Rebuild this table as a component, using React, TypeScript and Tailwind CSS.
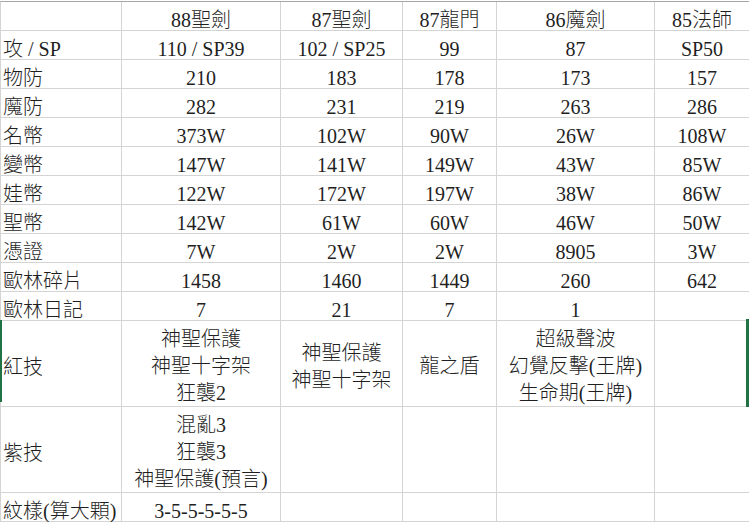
import React from 'react'

type Row = {
  label: string
  cells: (string | string[])[]
  tall?: boolean
}

const rows: Row[] = [
  { label: '', cells: ['88聖劍', '87聖劍', '87龍門', '86魔劍', '85法師'] },
  { label: '攻 / SP', cells: ['110 / SP39', '102 / SP25', '99', '87', 'SP50'] },
  { label: '物防', cells: ['210', '183', '178', '173', '157'] },
  { label: '魔防', cells: ['282', '231', '219', '263', '286'] },
  { label: '名幣', cells: ['373W', '102W', '90W', '26W', '108W'] },
  { label: '變幣', cells: ['147W', '141W', '149W', '43W', '85W'] },
  { label: '娃幣', cells: ['122W', '172W', '197W', '38W', '86W'] },
  { label: '聖幣', cells: ['142W', '61W', '60W', '46W', '50W'] },
  { label: '憑證', cells: ['7W', '2W', '2W', '8905', '3W'] },
  { label: '歐林碎片', cells: ['1458', '1460', '1449', '260', '642'] },
  { label: '歐林日記', cells: ['7', '21', '7', '1', ''] },
  {
    label: '紅技',
    tall: true,
    cells: [
      ['神聖保護', '神聖十字架', '狂襲2'],
      ['神聖保護', '神聖十字架'],
      ['龍之盾'],
      ['超級聲波', '幻覺反擊(王牌)', '生命期(王牌)'],
      [],
    ],
  },
  {
    label: '紫技',
    tall: true,
    cells: [['混亂3', '狂襲3', '神聖保護(預言)'], [], [], [], []],
  },
  { label: '紋樣(算大顆)', cells: ['3-5-5-5-5-5', '', '', '', ''] },
]

function App() {
  return (
    <div
      className="relative w-[749px] h-[522px] overflow-hidden bg-white pt-px text-[20px] font-light text-[#1f1f1f]"
      style={{ fontFamily: '"Liberation Serif", "Noto Sans CJK TC", serif' }}
    >
      <div className="grid grid-cols-[121px_159px_122px_94px_158px_95px] border-t border-l border-t-[#a6a6a6] border-l-[#d4d4d4]">
        {rows.map((row, i) => (
          <React.Fragment key={i}>
            <div
              className={
                row.tall
                  ? 'flex items-center h-[86px] pt-[6px] pl-[2px] border-r border-b border-[#d4d4d4] whitespace-nowrap'
                  : 'flex items-end h-[29px] pl-[2px] leading-[20px] border-r border-b border-[#d4d4d4] whitespace-nowrap'
              }
            >
              {row.label}
            </div>
            {row.cells.map((c, j) =>
              Array.isArray(c) ? (
                <div
                  key={j}
                  className="flex flex-col items-center justify-center h-[86px] pt-[6px] leading-[27px] border-r border-b border-[#d4d4d4] whitespace-nowrap"
                >
                  {c.map((line, k) => (
                    <div key={k}>{line}</div>
                  ))}
                </div>
              ) : (
                <div
                  key={j}
                  className="flex items-end justify-center h-[29px] leading-[20px] border-r border-b border-[#d4d4d4] whitespace-nowrap"
                >
                  {c}
                </div>
              ),
            )}
          </React.Fragment>
        ))}
      </div>
      {/* excel selection edges */}
      <div className="absolute left-0 top-[320px] w-[2px] h-[82px] bg-[#217346]"></div>
      <div className="absolute right-0 top-[319px] w-[3px] h-[88px] bg-[#217346]"></div>
    </div>
  )
}

export default App
